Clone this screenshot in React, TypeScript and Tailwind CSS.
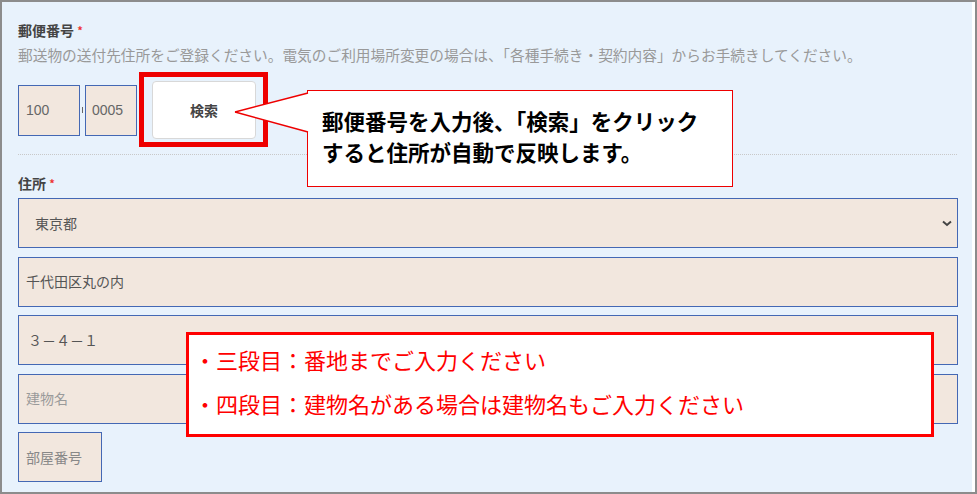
import React from 'react';

const jp = { fontFamily: '"Noto Sans CJK JP", "Noto Sans", sans-serif' };

function Field({ text, muted, className = '' }: { text: string; muted?: boolean; className?: string }) {
  return (
    <div
      className={`h-[50px] flex items-center border border-[#4468b4] bg-[#f2e7de] text-[14px] px-[7px] ${
        muted ? 'text-[#9a9a9a]' : 'text-[#555]'
      } ${className}`}
    >
      {text}
    </div>
  );
}

export default function App() {
  return (
    <div className="w-[977px] h-[494px] border-2 border-[#8c8c8c] bg-white flex relative" style={jp}>
      {/* 入力フォーム */}
      <div className="flex-1 bg-[#e8f2fc] pl-4 pr-[14px] pt-[18px] mr-[3px]">
        <div className="h-5 leading-5 text-[14px] font-bold text-[#444]">
          郵便番号 <span className="text-[#e33] text-[11px] align-top">*</span>
        </div>
        <div className="mt-[5px] h-5 leading-5 text-[14.7px] text-[#999] whitespace-nowrap">
          郵送物の送付先住所をご登録ください。電気のご利用場所変更の場合は、「各種手続き・契約内容」からお手続きしてください。
        </div>

        <div className="mt-4 flex items-center">
          <div
            className="w-[62px] h-[51px] border border-[#4468b4] bg-[#f2e7de] flex items-center pl-[7px] text-[14px] text-[#666]"
            style={{ fontFamily: '"Liberation Sans", Arial, sans-serif' }}
          >
            100
          </div>
          <div className="w-[5px] flex justify-center">
            <div className="w-px h-[6px] bg-[#666]" />
          </div>
          <div
            className="w-[52px] h-[51px] border border-[#4468b4] bg-[#f2e7de] flex items-center pl-[6px] text-[14px] text-[#666]"
            style={{ fontFamily: '"Liberation Sans", Arial, sans-serif' }}
          >
            0005
          </div>
          <button className="ml-[15px] w-[104px] h-[58px] bg-white border border-[#d8d8d8] rounded-[4px] text-[14px] font-bold text-[#444]">
            検索
          </button>
        </div>

        <div className="mt-[15px] mr-[1px] border-t border-dotted border-[#c8c8c8]" />

        <div className="mt-[18px] h-5 leading-5 text-[14px] font-bold text-[#444]">
          住所 <span className="text-[#e33] text-[11px] align-top">*</span>
        </div>

        <div className="mt-[5px] flex flex-col gap-[8.5px]">
          <div className="h-[50px] flex items-center justify-between border border-[#4468b4] bg-[#f2e7de] text-[14px] text-[#555] pl-4 pr-[5px]">
            <span>東京都</span>
            <svg width="10" height="7" viewBox="0 0 10 7">
              <path d="M1 1.5 L5 5 L9 1.5" fill="none" stroke="#444" strokeWidth="2" />
            </svg>
          </div>
          <Field text="千代田区丸の内" />
          <Field text="３－４－１" className="pl-[9px]" />
          <Field text="建物名" muted />
          <Field text="部屋番号" className="w-[84px] !text-[#888]" />
        </div>
      </div>

      {/* 注釈：検索ボタン */}
      <div className="absolute left-[137px] top-[70px] w-[129px] h-[75px] border-[5px] border-[#ee0000]" />

      {/* 吹き出し */}
      <div className="absolute left-[305px] top-[88px] w-[426px] h-[97px] bg-white border-[1.5px] border-[#ee0000] pl-[14px] pt-[14px]">
        <div className="text-[21.5px] leading-[31px] font-bold text-black whitespace-nowrap">
          郵便番号を入力後、「検索」をクリック
          <br />
          すると住所が自動で反映します。
        </div>
      </div>
      <svg className="absolute left-0 top-0 pointer-events-none" width="977" height="494">
        <polygon points="233,110 306,91 306,130" fill="white" />
        <rect x="305" y="91" width="3" height="39" fill="white" />
        <line x1="233" y1="110" x2="306" y2="91" stroke="#ee0000" strokeWidth="1.5" />
        <line x1="233" y1="110" x2="306" y2="130" stroke="#ee0000" strokeWidth="1.5" />
      </svg>

      {/* 注釈：三段目・四段目 */}
      <div className="absolute left-[184px] top-[330px] w-[748px] h-[105px] bg-white border-[3.5px] border-[#ff0000] pl-[5px] pt-[2px] text-[22px] leading-[44px] text-[#ff0000] whitespace-nowrap">
        <div>・三段目：番地までご入力ください</div>
        <div>・四段目：建物名がある場合は建物名もご入力ください</div>
      </div>
    </div>
  );
}
